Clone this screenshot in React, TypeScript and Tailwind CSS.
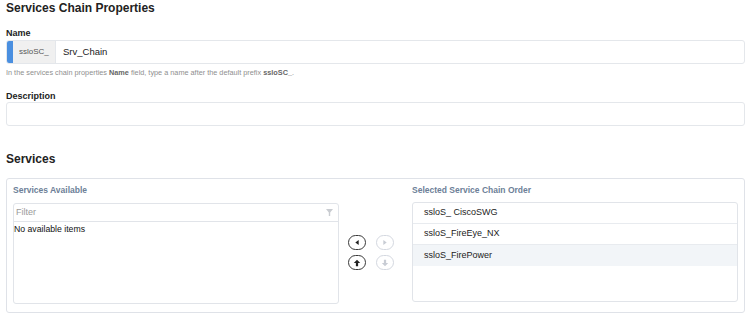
import { clsx } from 'clsx';

const font = { fontFamily: '"Liberation Sans", Arial, sans-serif' };

const selected = [
  { label: 'ssloS_ CiscoSWG', active: false },
  { label: 'ssloS_FireEye_NX', active: false },
  { label: 'ssloS_FirePower', active: true },
];

function CircleBtn({ enabled, children }: { enabled: boolean; children: React.ReactNode }) {
  return (
    <div
      className={clsx(
        'w-[18px] h-[15px] rounded-full border flex items-center justify-center',
        enabled ? 'border-[#3a3a3a] text-[#222]' : 'border-[#d4d8e0] text-[#c8ccd4]',
      )}
    >
      {children}
    </div>
  );
}

export default function App() {
  return (
    <div className="w-[749px] h-[320px] bg-white pl-[6px] pr-[4px] pt-[1px] text-[#222] overflow-hidden" style={font}>
      <h1 className="text-[12px] font-bold leading-[14px] text-[#222]">Services Chain Properties</h1>

      <p className="mt-[13px] text-[9px] font-bold leading-[10px] text-[#222]">Name</p>
      <div className="mt-[2px] h-[24px] flex rounded-[3px] border border-[#e4e7eb] overflow-hidden">
        <div className="w-[6px] bg-[#4a8fe0]" />
        <div className="w-[43px] bg-[#f0f0f0] border-r border-[#e4e7eb] flex items-center pl-[6px] text-[8px] text-[#555]">
          ssloSC_
        </div>
        <div className="flex items-center pl-[7px] text-[9.5px] text-[#222]">Srv_Chain</div>
      </div>
      <p className="mt-[5px] text-[7.3px] leading-[8px] text-[#8f8f8f]">
        In the services chain properties <span className="font-bold text-[#666]">Name</span> field, type a name after the default prefix{' '}
        <span className="font-bold text-[#666]">ssloSC_</span>.
      </p>

      <p className="mt-[14px] text-[9px] font-bold leading-[10px] text-[#222]">Description</p>
      <div className="mt-[1px] h-[24px] rounded-[3px] border border-[#e4e7eb]" />

      <h2 className="mt-[26px] text-[12px] font-bold leading-[14px] text-[#222]">Services</h2>

      <div className="mt-[12px] h-[135px] rounded-[3px] border border-[#dfe2e8] px-[6px] pt-[6px] flex">
        <div className="w-[326px] flex flex-col">
          <p className="text-[8.5px] font-bold leading-[11px] text-[#6d7f98]">Services Available</p>
          <div className="mt-[7px] h-[101px] rounded-[3px] border border-[#e1e4e9] flex flex-col">
            <div className="h-[18px] border-b border-[#e1e4e9] flex items-center justify-between pl-[2px] pr-[5px]">
              <span className="text-[9px] text-[#9a9a9a]">Filter</span>
              <svg width="7" height="7" viewBox="0 0 10 10">
                <path d="M0 0h10L6 5v5H4V5z" fill="#c9ccd1" />
              </svg>
            </div>
            <p className="pt-[2px] text-[8.7px] leading-[11px] text-[#111]">No available items</p>
          </div>
        </div>

        <div className="w-[73px] pl-[9px] pt-[50px] flex flex-col gap-[5px]">
          <div className="flex gap-[10px]">
            <CircleBtn enabled>
              <svg width="4" height="5" viewBox="0 0 4 6">
                <path d="M4 0v6L0 3z" fill="currentColor" />
              </svg>
            </CircleBtn>
            <CircleBtn enabled={false}>
              <svg width="4" height="5" viewBox="0 0 4 6">
                <path d="M0 0v6l4-3z" fill="currentColor" />
              </svg>
            </CircleBtn>
          </div>
          <div className="flex gap-[10px]">
            <CircleBtn enabled>
              <svg width="8" height="8" viewBox="0 0 10 10">
                <path d="M5 1L1 5h2.6v4h2.8V5H9z" fill="currentColor" />
              </svg>
            </CircleBtn>
            <CircleBtn enabled={false}>
              <svg width="8" height="8" viewBox="0 0 10 10">
                <path d="M5 9L1 5h2.6V1h2.8v4H9z" fill="currentColor" />
              </svg>
            </CircleBtn>
          </div>
        </div>

        <div className="w-[326px] flex flex-col">
          <p className="text-[8.5px] font-bold leading-[11px] text-[#6d7f98]">Selected Service Chain Order</p>
          <div className="mt-[6px] h-[100px] rounded-[3px] border border-[#e1e4e9] flex flex-col">
            {selected.map((s, i) => (
              <div
                key={s.label}
                className={clsx(
                  'h-[21px] flex items-center pl-[11px] text-[9px] text-[#222]',
                  i < selected.length - 1 && 'border-b border-[#e8ebef]',
                  s.active && 'bg-[#f2f5f8]',
                )}
              >
                {s.label}
              </div>
            ))}
          </div>
        </div>
      </div>
    </div>
  );
}
